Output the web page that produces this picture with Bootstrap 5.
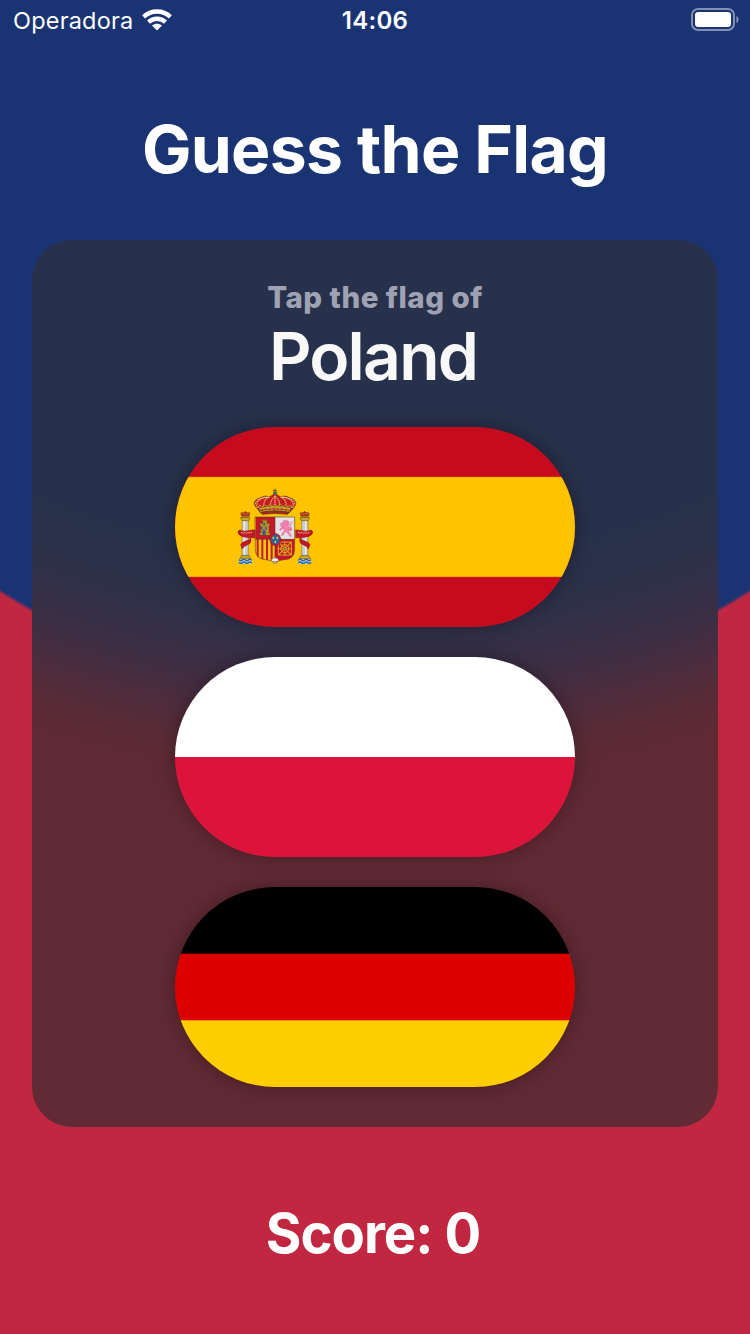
<!DOCTYPE html>
<html lang="en">
<head>
<meta charset="utf-8">
<meta name="viewport" content="width=device-width, initial-scale=1">
<title>Guess the Flag</title>
<link rel="stylesheet" href="https://cdn.jsdelivr.net/npm/bootstrap@5.3.0/dist/css/bootstrap.min.css">
<style>
  body {
    height: 1334px;
    font-family: Inter, "Liberation Sans", sans-serif;
    background: radial-gradient(circle at 50% 0, #1a3373 698px, #c22742 702px);
  }
  .status-bar { height: 40px; padding: 0 11px 0 13px; }
  .status-side { width: 200px; }
  .carrier { font-size: 23.5px; line-height: 40px; letter-spacing: .2px; padding-top: 2px; }
  .clock { font-size: 24px; line-height: 40px; font-weight: 600; letter-spacing: .3px; padding-top: 2px; margin-right: 2px; }
  .game-title { font-size: 66px; line-height: 80px; letter-spacing: -.75px; margin-top: 69px; }
  .panel {
    width: 686px; height: 887px; margin-top: 51px; padding-top: 39px; border-radius: 40px;
    background: radial-gradient(circle at 50% -550px,
      #28314b 870px, #2a314a 910px, #323048 950px, #3a2f45 980px,
      #452d41 1010px, #502c3b 1038px, #582b37 1062px, #5f2a34 1095px, #622a34 1145px);
  }
  .prompt { font-size: 29.5px; line-height: 36px; font-weight: 800; letter-spacing: .5px; color: #9fa2b2; }
  .country { font-size: 66px; line-height: 80px; font-weight: 600; letter-spacing: -1.8px; color: #f8f8f8; margin-top: 1px; }
  .flag-stack { gap: 30px; margin-top: 31px; }
  .flag-btn { width: 400px; height: 200px; box-shadow: 0 0 20px rgba(0,0,0,.33); }
  .score { font-size: 54.5px; line-height: 66px; margin-top: 73px; letter-spacing: -1px; }
</style>
</head>
<body class="d-flex flex-column align-items-center text-white overflow-hidden m-0">
  <header class="status-bar w-100 d-flex justify-content-between align-items-center">
    <div class="status-side d-flex align-items-center">
      <span class="carrier">Operadora</span>
      <svg class="ms-2" width="32" height="24" viewBox="0 0 32 24" fill="none" stroke="#fff" stroke-width="4.3">
        <path d="M2.6 8.9C10.2 1.7 21.8 1.7 29.4 8.9"/>
        <path d="M7.5 14.1C12.4 9.6 19.6 9.6 24.5 14.1"/>
        <path d="M11 17.6C14 15.2 18 15.2 21 17.6L16 22.6Z" fill="#fff" stroke="none"/>
      </svg>
    </div>
    <span class="clock">14:06</span>
    <div class="status-side d-flex justify-content-end">
      <svg width="48" height="24" viewBox="0 0 48 24">
        <rect x="1" y="1" width="42" height="21" rx="6" fill="none" stroke="#fff" stroke-opacity=".45" stroke-width="2"/>
        <rect x="4" y="4" width="36" height="15" rx="3.3" fill="#fff"/>
        <path d="M45.5 8C48.2 9 48.2 14 45.5 15Z" fill="#fff" fill-opacity=".5"/>
      </svg>
    </div>
  </header>

  <h1 class="game-title fw-bold mb-0">Guess the Flag</h1>

  <main class="panel d-flex flex-column align-items-center">
    <div class="prompt">Tap the flag of</div>
    <div class="country me-1">Poland</div>

    <div class="flag-stack d-flex flex-column">
      <button class="flag-btn btn p-0 border-0 rounded-pill overflow-hidden" aria-label="Flag 1">
        <svg class="d-block" width="400" height="200" viewBox="0 0 400 200">
          <rect width="400" height="200" fill="#c60b1e"/>
          <rect y="50" width="400" height="100" fill="#ffc400"/>
          <path d="M0 50H400M0 149.7H400" stroke="#d68a08" stroke-width=".6"/>
          <g transform="translate(50 53) scale(.33333)" stroke-linejoin="round" stroke-linecap="round">
            <!-- pillars -->
            <g id="pillar">
              <path d="M42 237h38v14H42z" fill="#b9cede"/>
              <path d="M43 240q5 5 9 0t9 0 9 0 9 0M43 248q5 4 9 0t9 0 9 0 9 0" fill="none" stroke="#2366a8" stroke-width="4"/>
              <path d="M45 235l5-9h22l5 9z" fill="#c8a52b" stroke="#55471c" stroke-width="1.6"/>
              <path d="M52 121h18v105H52z" fill="#cbcbcb" stroke="#6c6c6c" stroke-width="1.6"/>
              <path d="M58 124v99" stroke="#eee" stroke-width="4"/>
              <path d="M48 112h26v5l-3 5H51l-3-5z" fill="#c8a52b" stroke="#55471c" stroke-width="1.6"/>
              <path d="M51 110l-4-10q5-5 10-1l4-5 4 5q6-4 10 1l-4 10z" fill="#b5202a" stroke="#5e3611" stroke-width="1.8"/>
              <path d="M49 101q5-3 10 2 2-4 5 0 5-4 9-2M52 109h18" fill="none" stroke="#cfa62a" stroke-width="2"/>
            </g>
            <use href="#pillar" transform="translate(300) scale(-1 1)"/>
            <!-- ribbons -->
            <g id="ribbon">
              <path d="M90 150q-8-1-20 2-16 4-24-2-8 1-7 9 3 9 19 12 12 1 19 4-3 5-14 8-13 4-16 11l5 13q4-9 14-12 12-5 12-13l-2-9h14z" fill="#c4182a" stroke="#7f1515" stroke-width="1.6"/>
            </g>
            <use href="#ribbon" transform="translate(302) scale(-1 1)"/>
            <path d="M49 157l5 3 5-2 5 2 5-3 5 2 6-2M220 157l6 2 5-2 5 3 5-2 5 2 6-3" fill="none" stroke="#e8b36e" stroke-width="3" stroke-dasharray="4 4"/>
            <!-- shield -->
            <clipPath id="shield"><path d="M91 111H209V210Q208 238 178 239Q160 239 150 251Q140 239 122 239Q92 238 91 210Z"/></clipPath>
            <g clip-path="url(#shield)">
              <path d="M91 111h59v67H91z" fill="#c4172b"/>
              <path d="M150 111h60v67h-60z" fill="#e4e2e8"/>
              <path d="M91 178h59v75H91z" fill="#f6c312"/>
              <path d="M98 178v62M112 178v65M126 178v65M140 178v65" stroke="#c41c27" stroke-width="6"/>
              <path d="M150 178h60v75h-60z" fill="#c5142a"/>
              <path d="M133 253q5-17 17-21 12 4 17 21z" fill="#f2efe8" stroke="#777" stroke-width="1.5"/>
            </g>
            <path d="M91 111H209V210Q208 238 178 239Q160 239 150 251Q140 239 122 239Q92 238 91 210ZM150 111V235M91 178H209" fill="none" stroke="#5a3b21" stroke-width="1.7"/>
            <!-- castle -->
            <path d="M104 165v-7h3v-20h-2v-9h5v3h3v-9h-2v-5h4v3h3v-3h3v3h4v-3h3v5h-2v9h3v-3h5v9h-2v20h3v7z" fill="#c99a18" stroke="#594d19" stroke-width="1.6"/>
            <path d="M113 164v-11q4-7 8 0v11zM109 141h4v8h-4zM121 141h4v8h-4zM116 129h4v7h-4z" fill="#2f56b5" stroke="#2f56b5"/>
            <path d="M105 158h26M108 138h20M111 124h12" stroke="#675821" stroke-width="1.2"/>
            <!-- lion -->
            <path d="M174 126l3-6 5 3 4-4 3 5 5 2-3 4 2 5-5 2 6 5 6 6-2 5-6-4-4 3 6 6 4 7 3 4h-7l-4-8-8-6-5 4-1 6-7 2 2-7 5-6 2-8-6 1-5 5-4-4 6-5 7-4-1-3-7 1-4-4 4-3z" fill="#f180ad" stroke="#c25c8a" stroke-width=".8"/>
            <path d="M190 151q13 2 8-8-7-6 1-14l4-4M168 139l8 1M182 127l3 2" fill="none" stroke="#ec6799" stroke-width="3"/>
            <!-- chains -->
            <g fill="none" stroke="#d8a91c" stroke-width="3.2" stroke-dasharray="4 1.5">
              <path d="M160 186h39v39h-39zM160 186l39 39M199 186l-39 39M179.500 185v42M158 206h43"/>
              <circle cx="179.500" cy="206" r="12"/>
            </g>
            <circle cx="179.500" cy="206" r="3" fill="#4c8b35"/>
            <!-- centre oval -->
            <ellipse cx="151" cy="179" rx="16.500" ry="18.500" fill="#c41c2c" stroke="#742127" stroke-width="1.5"/>
            <ellipse cx="151" cy="179" rx="12.500" ry="14.500" fill="#1c61ad"/>
            <path id="lily" d="M145 169l1.500 3 2.500-1-2 3.500 1 2.500h-2l-1 2-1-2h-2l1-2.500-2-3.500 2.500 1z" fill="#e6bf2a"/>
            <use href="#lily" x="12"/><use href="#lily" x="6" y="12"/>
            <path d="M146 242l-2 4 4-1zM154 241l3 5-4-1z" fill="#2f7c40"/><circle cx="150" cy="245" r="2" fill="#b42736"/>
            <!-- crown -->
            <path d="M105 96Q92 82 87 72Q89 57 104 54Q120 44 135 50Q143 43 150 42Q158 43 165 50Q181 44 196 54Q211 57 213 72Q209 83 195 96Z" fill="#c5182b" stroke="#67501b" stroke-width="2"/>
            <path d="M96 82q-4-18 12-26 12-5 24-5-19 10-16 34zM136 81q-1-22 14-32 16 10 14 32zM204 82q4-18-12-26-12-5-24-5 19 10 16 34z" fill="#d3172c" stroke="#c9a43c" stroke-width="3.2"/>
            <path d="M91 72q2-14 17-16 12-6 24-4M209 72q-2-14-17-16-12-6-24-4M150 48v31" fill="none" stroke="#f0e2a5" stroke-width="3" stroke-dasharray="2 4"/>
            <path d="M102 84q48-14 96 0l-4 13q-44-7-88 0z" fill="#c6a326" stroke="#5d471b" stroke-width="2"/>
            <path d="M108 91q42-8 84 0" fill="none" stroke="#b52128" stroke-width="4" stroke-dasharray="6 6"/>
            <path d="M99 82l5-7 7 6 8-7 7 6 8-7 8 6 8-7 8 7 8-6 8 7 7-6 8 7 7-6 6 7" fill="none" stroke="#c29b2b" stroke-width="3"/>
            <path d="M107 97q43-9 86 0l-5 6q-38-5-76 0z" fill="#a92028" stroke="#54401b" stroke-width="2"/>
            <circle cx="150" cy="39" r="5" fill="#2865a7" stroke="#80651a" stroke-width="2"/>
            <path d="M150 27v10M145 31h10" stroke="#7c611a" stroke-width="3"/>
          </g>
        </svg>
      </button>
      <button class="flag-btn btn p-0 border-0 rounded-pill overflow-hidden" aria-label="Flag 2">
        <svg class="d-block" width="400" height="200"><rect y="100" width="400" height="100" fill="#dc143c"/><rect width="400" height="100" fill="#fff"/></svg>
      </button>
      <button class="flag-btn btn p-0 border-0 rounded-pill overflow-hidden" aria-label="Flag 3">
        <svg class="d-block" width="400" height="200"><rect y="133" width="400" height="67" fill="#ffce00"/><rect y="66" width="400" height="67.300" fill="#d00"/><rect width="400" height="66.700" fill="#000"/></svg>
      </button>
    </div>
  </main>

  <div class="score fw-bold pe-1">Score: 0</div>
<script src="https://cdn.jsdelivr.net/npm/bootstrap@5.3.0/dist/js/bootstrap.bundle.min.js"></script>
</body>
</html>
